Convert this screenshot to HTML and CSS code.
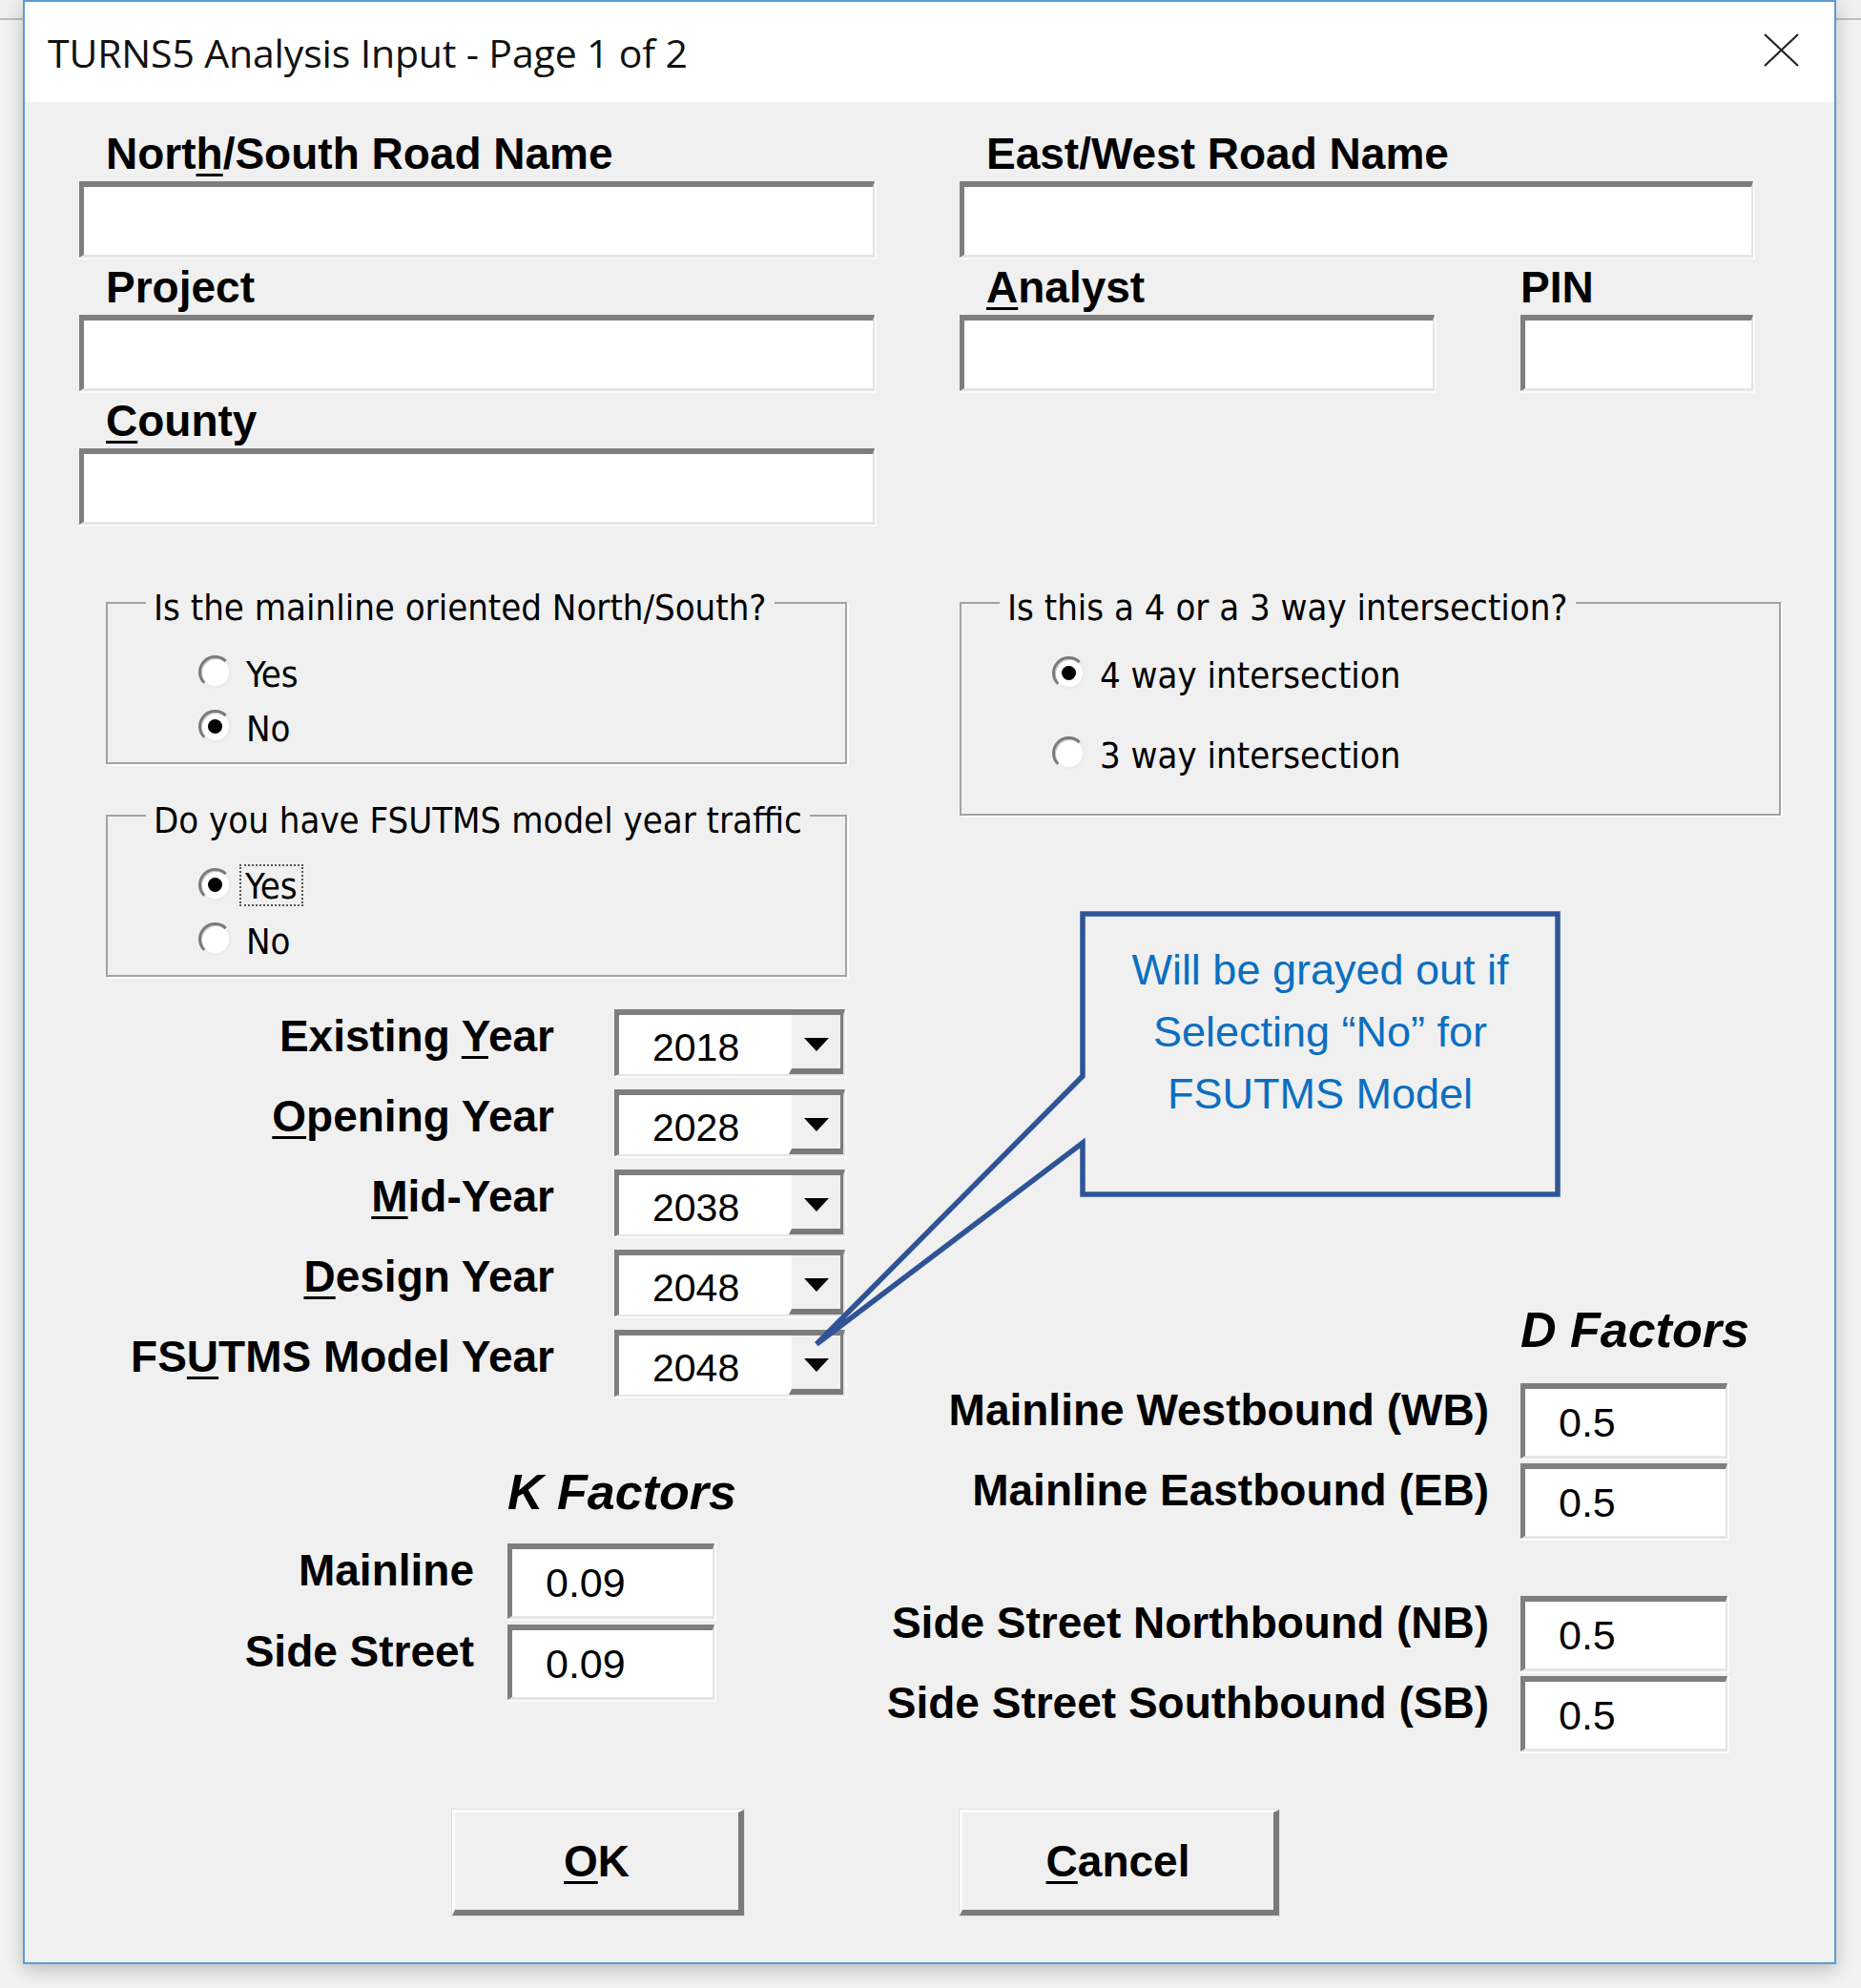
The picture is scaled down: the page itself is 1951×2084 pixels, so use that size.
FILE: index.html
```html
<!DOCTYPE html>
<html lang="en">
<head>
<meta charset="utf-8">
<title>TURNS5 Analysis Input - Page 1 of 2</title>
<link rel="stylesheet" href="styles.css">
</head>
<body>
<div class="dialog">
  <div class="titlebar">
    <span class="title">TURNS5 Analysis Input - Page 1 of 2</span>
    <svg class="close" width="37" height="35" viewBox="0 0 37 35"><path d="M1 1L36 34M36 1L1 34" stroke="#222" stroke-width="2.2" fill="none"/></svg>
  </div>

  <div class="content">
    <div class="fields">
      <div class="field">
        <label class="lbl">Nort<u>h</u>/South Road Name</label>
        <input class="tb" type="text">
      </div>
      <div class="field">
        <label class="lbl">East/West Road Name</label>
        <input class="tb" type="text">
      </div>
      <div class="field">
        <label class="lbl">Project</label>
        <input class="tb" type="text">
      </div>
      <div class="pair">
        <div class="field analyst">
          <label class="lbl"><u>A</u>nalyst</label>
          <input class="tb" type="text">
        </div>
        <div class="field pin">
          <label class="lbl flush">PIN</label>
          <input class="tb" type="text">
        </div>
      </div>
      <div class="field">
        <label class="lbl"><u>C</u>ounty</label>
        <input class="tb" type="text">
      </div>
    </div>

    <div class="middle">
      <div class="col-left">
        <fieldset class="grp g1">
          <legend>Is the mainline oriented North/South?</legend>
          <div class="radios">
            <div class="radio"><span class="rb"></span><span class="rt">Yes</span></div>
            <div class="radio"><span class="rb on"></span><span class="rt">No</span></div>
          </div>
        </fieldset>

        <fieldset class="grp g2">
          <legend>Do you have FSUTMS model year traffic</legend>
          <div class="radios">
            <div class="radio"><span class="rb on"></span><span class="rt focus">Yes</span></div>
            <div class="radio"><span class="rb"></span><span class="rt">No</span></div>
          </div>
        </fieldset>

        <div class="years">
          <div class="yrow"><span class="ylbl"><span>Existing <u>Y</u>ear</span></span><div class="combo"><span class="cval">2018</span><span class="cbtn"><i class="tri"></i></span></div></div>
          <div class="yrow"><span class="ylbl"><span><u>O</u>pening Year</span></span><div class="combo"><span class="cval">2028</span><span class="cbtn"><i class="tri"></i></span></div></div>
          <div class="yrow"><span class="ylbl"><span><u>M</u>id-Year</span></span><div class="combo"><span class="cval">2038</span><span class="cbtn"><i class="tri"></i></span></div></div>
          <div class="yrow"><span class="ylbl"><span><u>D</u>esign Year</span></span><div class="combo"><span class="cval">2048</span><span class="cbtn"><i class="tri"></i></span></div></div>
          <div class="yrow"><span class="ylbl"><span>FS<u>U</u>TMS Model Year</span></span><div class="combo"><span class="cval">2048</span><span class="cbtn"><i class="tri"></i></span></div></div>
        </div>

        <div class="kf">
          <h2 class="fhead">K Factors</h2>
          <div class="krows">
            <div class="frow"><span class="flbl klbl"><span>Mainline</span></span><input class="tb num" type="text" value="0.09"></div>
            <div class="frow"><span class="flbl klbl"><span>Side Street</span></span><input class="tb num" type="text" value="0.09"></div>
          </div>
        </div>
      </div>

      <div class="col-right">
        <fieldset class="grp g3">
          <legend>Is this a 4 or a 3 way intersection?</legend>
          <div class="radios">
            <div class="radio"><span class="rb on"></span><span class="rt">4 way intersection</span></div>
            <div class="radio"><span class="rb"></span><span class="rt">3 way intersection</span></div>
          </div>
        </fieldset>

        <div class="df">
          <h2 class="fhead">D Factors</h2>
          <div class="dpairs">
            <div class="dpair">
              <div class="frow drow"><span class="flbl dlbl"><span>Mainline Westbound (WB)</span></span><input class="tb num" type="text" value="0.5"></div>
              <div class="frow drow"><span class="flbl dlbl"><span>Mainline Eastbound (EB)</span></span><input class="tb num" type="text" value="0.5"></div>
            </div>
            <div class="dpair">
              <div class="frow drow"><span class="flbl dlbl"><span>Side Street Northbound (NB)</span></span><input class="tb num" type="text" value="0.5"></div>
              <div class="frow drow"><span class="flbl dlbl"><span>Side Street Southbound (SB)</span></span><input class="tb num" type="text" value="0.5"></div>
            </div>
          </div>
        </div>
      </div>
    </div>

    <div class="buttons">
      <div class="bcol-left"><button class="btn ok" type="button"><u>O</u>K</button></div>
      <div class="bcol-right"><button class="btn cancel" type="button"><u>C</u>ancel</button></div>
    </div>
  </div>

  <div class="callout">
    <svg class="callout-shape" width="790" height="470" viewBox="0 0 790 470">
      <path d="M285 178 L285 8 L783 8 L783 302 L285 302 L285 248 L6 459 Z" fill="#f0f0f0" stroke="#2f5496" stroke-width="5.5" stroke-linejoin="miter" stroke-miterlimit="3"/>
    </svg>
    <div class="callout-text">Will be grayed out if<br>Selecting “No” for<br>FSUTMS Model</div>
  </div>
</div>
</body>
</html>
```

FILE: styles.css
```css
* {
  box-sizing: border-box;
}

html, body {
  margin: 0;
  padding: 0;
}

body {
  width: 1951px;
  height: 2084px;
  overflow: hidden;
  background: linear-gradient(#efefef 0 19px, #bdbdbd 19px 21px, #f2f2f2 21px);
  font-family: "Liberation Sans", Arial, sans-serif;
  color: #000;
}

.dialog {
  position: relative;
  margin-left: 24px;
  width: 1901px;
  height: 2059px;
  background: #f0f0f0;
  border: 2px solid #5b9bd8;
  box-shadow: 0 6px 18px rgba(0, 0, 0, 0.22);
}

/* title bar */
.titlebar {
  height: 105px;
  background: #fff;
  display: flex;
  align-items: center;
  justify-content: space-between;
  padding: 0 37px 0 24px;
}

.title {
  font-family: "Open Sans", "Noto Sans", sans-serif;
  font-size: 41px;
  color: #111;
  letter-spacing: -0.15px;
}

.close {
  display: block;
  margin-bottom: 4px;
}

/* content */
.content {
  padding: 28px 0 0 57px;
}

.fields {
  display: grid;
  grid-template-columns: 834px 832px;
  column-gap: 89px;
  row-gap: 5px;
}

.field {
  display: flex;
  flex-direction: column;
  gap: 3px;
}

.pair {
  display: flex;
  justify-content: space-between;
}

.analyst {
  width: 498px;
}

.pin {
  width: 244px;
}

.lbl {
  font-weight: bold;
  font-size: 46px;
  line-height: 52px;
  padding-left: 28px;
  white-space: nowrap;
}

.lbl.flush {
  padding-left: 0;
}

u {
  text-decoration-thickness: 3px;
  text-underline-offset: 5px;
}

.tb {
  display: block;
  width: 100%;
  height: 80px;
  margin: 0;
  padding: 0 0 0 35px;
  background: #fff;
  border-style: solid;
  border-width: 6px 2px 3px 5px;
  border-color: #7e7e7e #e4e4e4 #e6e6e6 #7e7e7e;
  box-shadow: 1px 1px 0 1px #fbfbfb;
  outline: none;
  font-family: "Liberation Sans", Arial, sans-serif;
  font-size: 43px;
  color: #000;
}

/* middle area */
.middle {
  display: flex;
  gap: 89px;
  margin-top: 57px;
}

.col-left {
  width: 834px;
  display: flex;
  flex-direction: column;
}

.col-right {
  width: 861px;
  display: flex;
  flex-direction: column;
}

.grp {
  margin: 0;
  padding: 0;
  min-width: 0;
  border: 2px solid #a3a3a3;
  box-shadow: 2px 2px 0 #fdfdfd;
}

.grp legend {
  margin-left: 40px;
  padding: 10px 8px 0;
  font-family: "DejaVu Sans Condensed", "DejaVu Sans", sans-serif;
  font-size: 38px;
  line-height: 40px;
  color: #000;
}

.g1, .g2 {
  margin-left: 28px;
  width: 777px;
}

.g2 {
  margin-top: 29px;
}

.g3 {
  width: 861px;
}

.radios {
  display: flex;
  flex-direction: column;
  padding: 19px 0 9px 95px;
}

.g3 .radios {
  gap: 27px;
  padding: 20px 0 35px 95px;
}

.radio {
  display: flex;
  align-items: center;
  height: 57px;
  gap: 15px;
}

.rb {
  width: 35px;
  height: 35px;
  flex: none;
  border-radius: 50%;
  background: #fff;
  border: 3px solid;
  border-color: #7a7a7a #ececec #ececec #7a7a7a;
  box-shadow: inset 1px 1px 0 #c4c4c4;
  display: flex;
  align-items: center;
  justify-content: center;
}

.rb.on::after {
  content: "";
  width: 15px;
  height: 15px;
  border-radius: 50%;
  background: #000;
}

.rt {
  font-family: "DejaVu Sans Condensed", "DejaVu Sans", sans-serif;
  font-size: 38px;
  line-height: 40px;
  padding-top: 4px;
  color: #000;
  white-space: nowrap;
}

.rt.focus {
  margin-left: -6px;
  padding: 2px 5px 0 5px;
  line-height: 40px;
  outline: 2px dotted #555;
  outline-offset: -1px;
}

/* years */
.years {
  display: flex;
  flex-direction: column;
  gap: 14px;
  margin-top: 34px;
}

.yrow {
  display: flex;
  align-items: flex-start;
  gap: 63px;
}

.ylbl,
.flbl {
  display: flex;
  justify-content: flex-end;
  flex: none;
  margin-top: 2px;
  font-weight: bold;
  font-size: 46px;
  line-height: 52px;
  white-space: nowrap;
}

.ylbl {
  width: 498px;
}

.ylbl > span,
.flbl > span {
  flex: none;
}

.combo {
  display: flex;
  width: 242px;
  height: 70px;
  background: #fff;
  border-style: solid;
  border-width: 6px 2px 2px 5px;
  border-color: #7e7e7e #e4e4e4 #e6e6e6 #7e7e7e;
  box-shadow: 1px 1px 0 1px #fbfbfb;
}

.cval {
  flex: 1;
  display: flex;
  align-items: center;
  padding: 6px 0 0 35px;
  font-size: 41px;
}

.cbtn {
  width: 57px;
  flex: none;
  display: flex;
  align-items: center;
  justify-content: center;
  padding-top: 5px;
  background: #f0f0f0;
  border-left: 3px solid #fff;
  border-right: 3px solid #7a7a7a;
  border-bottom: 6px solid #7a7a7a;
}

.tri {
  display: block;
  width: 0;
  height: 0;
  border-left: 13px solid transparent;
  border-right: 13px solid transparent;
  border-top: 14px solid #000;
}

/* factor sections */
.fhead {
  margin: 0;
  font-size: 52px;
  line-height: 58px;
  font-style: italic;
  font-weight: bold;
  white-space: nowrap;
}

.kf {
  margin-top: 71px;
}

.kf .fhead {
  margin-left: 449px;
  margin-bottom: 25px;
}

.krows {
  display: flex;
  flex-direction: column;
  gap: 6px;
}

.frow {
  display: flex;
  align-items: flex-start;
  gap: 35px;
}

.frow .tb {
  width: 217px;
  height: 79px;
  flex: none;
}

.klbl {
  width: 414px;
}

.df {
  margin-top: 510px;
}

.df .fhead {
  margin-left: 588px;
  margin-bottom: 27px;
}

.dpairs {
  display: flex;
  flex-direction: column;
  gap: 60px;
}

.dpair {
  display: flex;
  flex-direction: column;
  gap: 5px;
}

.drow {
  gap: 33px;
}

.dlbl {
  width: 555px;
}

/* buttons */
.buttons {
  display: flex;
  gap: 89px;
  margin-top: 61px;
}

.bcol-left {
  width: 834px;
  padding-left: 391px;
}

.bcol-right {
  width: 861px;
}

.btn {
  display: block;
  height: 111px;
  margin: 0;
  padding: 0;
  background: #f0f0f0;
  border-style: solid;
  border-width: 3px 6px 6px 3px;
  border-color: #fdfdfd #7a7a7a #7a7a7a #fdfdfd;
  box-shadow: 0 0 0 1px #dedede;
  font-family: "Liberation Sans", Arial, sans-serif;
  font-weight: bold;
  font-size: 46px;
  color: #000;
}

.ok {
  width: 306px;
}

.cancel {
  width: 335px;
}

/* callout overlay */
.callout {
  position: absolute;
  left: 824px;
  top: 948px;
  width: 790px;
  height: 470px;
  pointer-events: none;
}

.callout-shape {
  position: absolute;
  left: 0;
  top: 0;
}

.callout-text {
  position: absolute;
  left: 285px;
  top: 8px;
  width: 498px;
  padding-top: 26px;
  text-align: center;
  font-family: "Liberation Sans", Arial, sans-serif;
  font-size: 45px;
  line-height: 65px;
  color: #0a6fc2;
}
```
